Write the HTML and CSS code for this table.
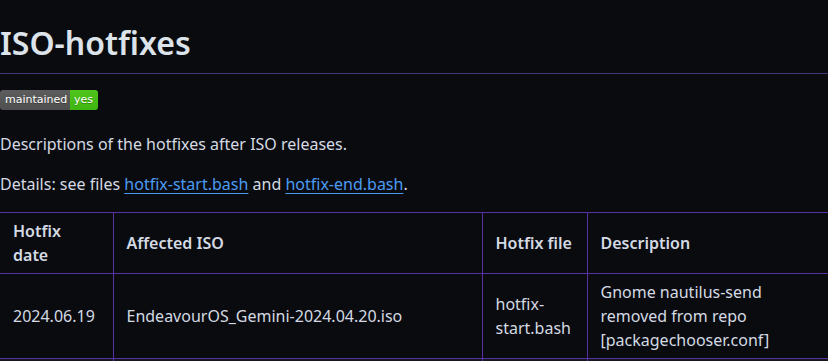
FILE: index.html
```html
<!DOCTYPE html>
<html lang="en">
<head>
<meta charset="utf-8">
<title>ISO-hotfixes</title>
<link rel="stylesheet" href="styles.css">
</head>
<body>
<article class="markdown">
  <h1 class="title">ISO-hotfixes</h1>
  <p class="badges">
    <span class="badge"><span class="badge-label">maintained</span><span class="badge-value">yes</span></span>
  </p>
  <p>Descriptions of the hotfixes after ISO releases.</p>
  <p>Details: see files <a href="#">hotfix-start.bash</a> and <a href="#">hotfix-end.bash</a>.</p>
  <table class="hotfixes">
    <colgroup>
      <col class="c-date">
      <col class="c-iso">
      <col class="c-file">
      <col class="c-desc">
    </colgroup>
    <thead>
      <tr><th>Hotfix date</th><th>Affected ISO</th><th>Hotfix file</th><th>Description</th></tr>
    </thead>
    <tbody>
      <tr><td>2024.06.19</td><td>EndeavourOS_Gemini-2024.04.20.iso</td><td>hotfix-start.bash</td><td>Gnome nautilus-send removed from repo [packagechooser.conf]</td></tr>
      <tr class="next-row"><td></td><td></td><td></td><td></td></tr>
    </tbody>
  </table>
</article>
</body>
</html>
```

FILE: styles.css
```css
html, body {
  margin: 0;
  padding: 0;
  background: #0a0b0f;
  overflow: hidden;
}

.markdown {
  font-family: "Noto Sans", "Open Sans", sans-serif;
  font-size: 16px;
  line-height: 1.5;
  color: #d4dae3;
}

.title {
  margin: 23px 0 16px;
  padding-bottom: 10px;
  font-size: 32px;
  line-height: 40px;
  font-weight: 600;
  color: #dde3ea;
  border-bottom: 1px solid #45377a;
}

.markdown p {
  margin: 0 0 16px;
}

.badges {
  height: 26px;
  display: flex;
  align-items: flex-start;
}

.badge {
  display: inline-flex;
  height: 20px;
  border-radius: 3px;
  overflow: hidden;
  font-family: "DejaVu Sans", Verdana, sans-serif;
  font-size: 11px;
  line-height: 20px;
  color: #fff;
  text-shadow: 0 1px 0 rgba(1, 1, 1, 0.3);
}

.badge-label {
  background: linear-gradient(#5d5d5d, #4f4f4f);
  padding: 0 3px 0 5px;
  width: 62px;
}

.badge-value {
  background: linear-gradient(#4fc41c, #3fb511);
  padding: 0 5px 0 4px;
}

.markdown a {
  color: #4c9bf3;
  text-decoration: underline;
  text-underline-offset: 3px;
}

.hotfixes {
  border-collapse: collapse;
  table-layout: fixed;
  width: 830px;
}

.c-date { width: 113px; }
.c-iso { width: 369px; }
.c-file { width: 105px; }
.c-desc { width: 243px; }

.hotfixes th,
.hotfixes td {
  padding: 6px 13px;
  border: 1px solid #5730a4;
  vertical-align: middle;
  text-align: left;
}

.hotfixes th {
  font-weight: 600;
}

.hotfixes th:first-child,
.hotfixes td:first-child {
  border-left: none;
}

.hotfixes th:last-child,
.hotfixes td:last-child {
  border-right: none;
}

.hotfixes .next-row {
  background: #16161f;
  height: 60px;
}
```
